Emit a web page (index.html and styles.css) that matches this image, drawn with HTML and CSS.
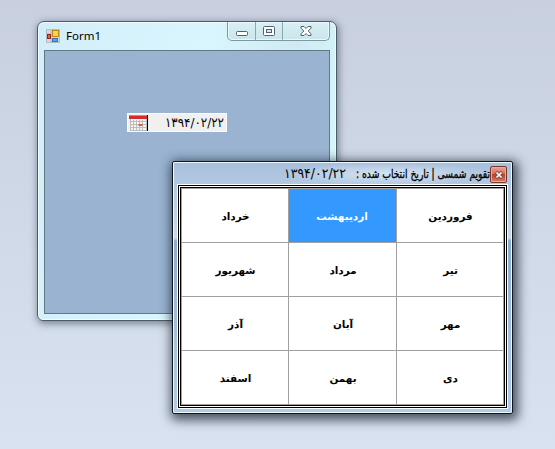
FILE: index.html
```html
<!DOCTYPE html>
<html lang="fa">
<head>
<meta charset="utf-8">
<title>Form1</title>
<link rel="stylesheet" href="styles.css">
</head>
<body>
<main class="desktop">
  <section class="window">
    <header class="window-bar">
      <svg class="app-icon" width="14" height="14" viewBox="0 0 14 14">
        <path d="M.5 .5h13v13H.5zM.5 5h6M5 .5v13" fill="#d5d9da" stroke="#b5bcc0"/>
        <rect x="6.500" y="1.500" width="6" height="6" fill="#ffd247" stroke="#b98b16"/>
        <rect x="1.500" y="5.500" width="3" height="4" fill="#d8604c" stroke="#9b2119"/>
        <rect x="6.500" y="9.500" width="5" height="3" fill="#5aa4ee" stroke="#3272bd"/>
      </svg>
      <span class="window-title">Form1</span>
      <div class="controls">
        <span class="control"><svg width="12" height="5"><rect x=".5" y=".5" width="11" height="4" rx="1" fill="#fff" stroke="#50626b"/></svg></span>
        <span class="control"><svg width="12" height="10"><rect x=".5" y=".5" width="11" height="9" rx="1" fill="#fff" stroke="#50626b"/><rect x="3.500" y="3.500" width="5" height="3" fill="#d2e8ee" stroke="#50626b"/></svg></span>
        <span class="control control-close"><svg width="12" height="10" viewBox="0 0 12 10"><path d="M1 .5h3l2 2 2-2h3v1.700L8.200 5 11 7.800v1.700H8l-2-2-2 2H1V7.800L3.800 5 1 2.200z" fill="#fff" stroke="#50626b"/></svg></span>
      </div>
    </header>
    <div class="client">
      <div class="date-field">
        <svg width="21" height="18" viewBox="0 0 21 18">
          <path d="M1 4h17v12H1z" fill="#f4f4f2"/>
          <path d="M1 7.500h17M1 10.500h17M1 13.500h17M1 16.500h17M1.500 4v13M4.500 6v11M7.500 6v11M10.500 6v11M13.500 6v11M17.500 4v13" stroke="#bdbdbb"/>
          <path d="M0 1h18v4H0z" fill="#d52b2b"/><path d="M0 1h18v1H0z" fill="#f27b75"/>
          <path d="M9.500 10h4v2h-4z" fill="#e5584e"/><path d="M18.500 1v16" stroke="#000"/>
        </svg>
        <svg class="field-date" width="62" height="18"><text x="2" y="13" textLength="59" lengthAdjust="spacingAndGlyphs">۱۳۹۴/۰۲/۲۲</text></svg>
      </div>
    </div>
  </section>

  <section class="dialog">
    <header class="dialog-bar">
      <svg class="dialog-title" width="210" height="22">
        <text x="2" y="15" textLength="62" lengthAdjust="spacingAndGlyphs" class="title-date">۱۳۹۴/۰۲/۲۲</text>
        <text x="208" y="15" direction="rtl" textLength="134" lengthAdjust="spacingAndGlyphs">تقویم شمسی | تاریخ انتخاب شده :</text>
      </svg>
      <span class="dialog-close"><svg width="8" height="8" viewBox="0 0 8 8"><path d="M1 1l6 6M7 1L1 7" stroke="#784b48" stroke-width="3.200"/><path d="M1.500 1.500l5 5M6.500 1.500l-5 5" stroke="#fff" stroke-width="1.700"/></svg></span>
    </header>
    <div class="frame">
      <div class="months" dir="rtl">
        <div class="month">فروردین</div><div class="month selected">اردیبهشت</div><div class="month">خرداد</div>
        <div class="month">تیر</div><div class="month">مرداد</div><div class="month">شهریور</div>
        <div class="month">مهر</div><div class="month">آبان</div><div class="month">آذر</div>
        <div class="month">دی</div><div class="month">بهمن</div><div class="month">اسفند</div>
      </div>
    </div>
  </section>
</main>
</body>
</html>
```
FILE: styles.css
```css
* { box-sizing: border-box; }
body { margin: 0; overflow: hidden; font-family: "DejaVu Sans", sans-serif; }
svg { display: block; flex: none; overflow: visible; }
.desktop {
  position: relative; width: 555px; height: 449px; overflow: hidden;
  background: linear-gradient(#c8d0e0, #d8e2f0);
}
.window {
  position: absolute; left: 37px; top: 21px; width: 300px; height: 300px;
  padding: 0 6px 6px; display: flex; flex-direction: column;
  border: 1px solid #4d5c63; border-radius: 7px 7px 6px 6px;
  background: linear-gradient(100deg, #d2eefa, #d9f5fd 50%, #cfeaf3 75%, #dafbff);
  box-shadow: inset 0 0 0 1px #effdff, 1px 2px 7px 1px rgba(40, 50, 70, .5);
}
.window-bar { height: 28px; flex: none; display: flex; align-items: flex-start; }
.app-icon { margin: 7px 0 0 2px; }
.window-title { margin: 5px 0 0 6px; font: 11.500px/18px "Noto Sans", sans-serif; color: #000; }
.controls {
  display: flex; height: 19px; margin: 0 0 0 auto;
  border: 1px solid #7f989f; border-top: 0; border-radius: 0 0 5px 5px;
  background: linear-gradient(#d9f0f5, #c9e5ec);
  box-shadow: inset 0 0 0 1px #e7f9fc;
}
.control { width: 28px; display: flex; align-items: center; justify-content: center; border-right: 1px solid #8fa8af; }
.control:first-child { padding-top: 4px; }
.control:nth-child(2) { width: 27px; }
.control-close { width: 46px; border: 0; }
.client { flex: 1; padding: 62px 0 0 82px; border: 1px solid #627985; background: #99b3d1; }
.date-field {
  width: 100px; height: 19px; padding: 0 1px; display: flex; justify-content: space-between;
  border: 1px solid #fafafa; background: #f0f0f0;
}
.field-date { font-size: 13px; }
.dialog {
  position: absolute; left: 172px; top: 161px; width: 341px; height: 253px;
  padding: 0 3px 4px; display: flex; flex-direction: column;
  border: 1px solid #10171d; border-radius: 2px;
  background: linear-gradient(#a9c0dd 0, #b2c8e2 22px, #c9dae9 76px, #8caccf 79px, #a5c2df 180px, #b2cbe6);
  box-shadow: inset 0 0 0 1px #eef7fb, 2px 3px 11px 3px rgba(15, 25, 40, .72);
}
.dialog-bar { height: 22px; flex: none; display: flex; justify-content: flex-end; align-items: flex-start; padding: 1px 1px 0; }
.dialog-title { font-size: 12px; font-family: "DejaVu Sans Condensed", "DejaVu Sans", sans-serif; background: radial-gradient(closest-side, rgba(229, 240, 248, .75), rgba(229, 240, 248, 0)); }
.dialog-title text { stroke: #000; stroke-width: .3px; }
.dialog-title .title-date { font-size: 13.500px; stroke: none; }
.dialog-close {
  width: 17px; height: 17px; margin: 3px 1px 0 -2px; display: flex; align-items: center; justify-content: center;
  border: 1px solid #76382f; border-radius: 2px; background: linear-gradient(#e9a394, #d56c55 48%, #bd3e27 50%, #d58067);
  box-shadow: inset 0 0 0 1px #e8aaa0;
}
.frame { flex: 1; margin: 0 1px; border: 1px solid #fff; background: #fff; }
.months {
  display: grid; grid-template-columns: 106px 107px 106px; grid-template-rows: repeat(4, 53px); gap: 1px;
  padding: 1px; border: 3px double #000; background: #a0a0a0; background-clip: padding-box;
}
.month {
  display: flex; align-items: center; justify-content: center; padding: 0 0 0 1px;
  background: #fff; color: #000; font-size: 10.400px; font-weight: bold;
}
.month.selected { padding: 0 1px 0 0; background: #3399ff; color: #fff; }
```
